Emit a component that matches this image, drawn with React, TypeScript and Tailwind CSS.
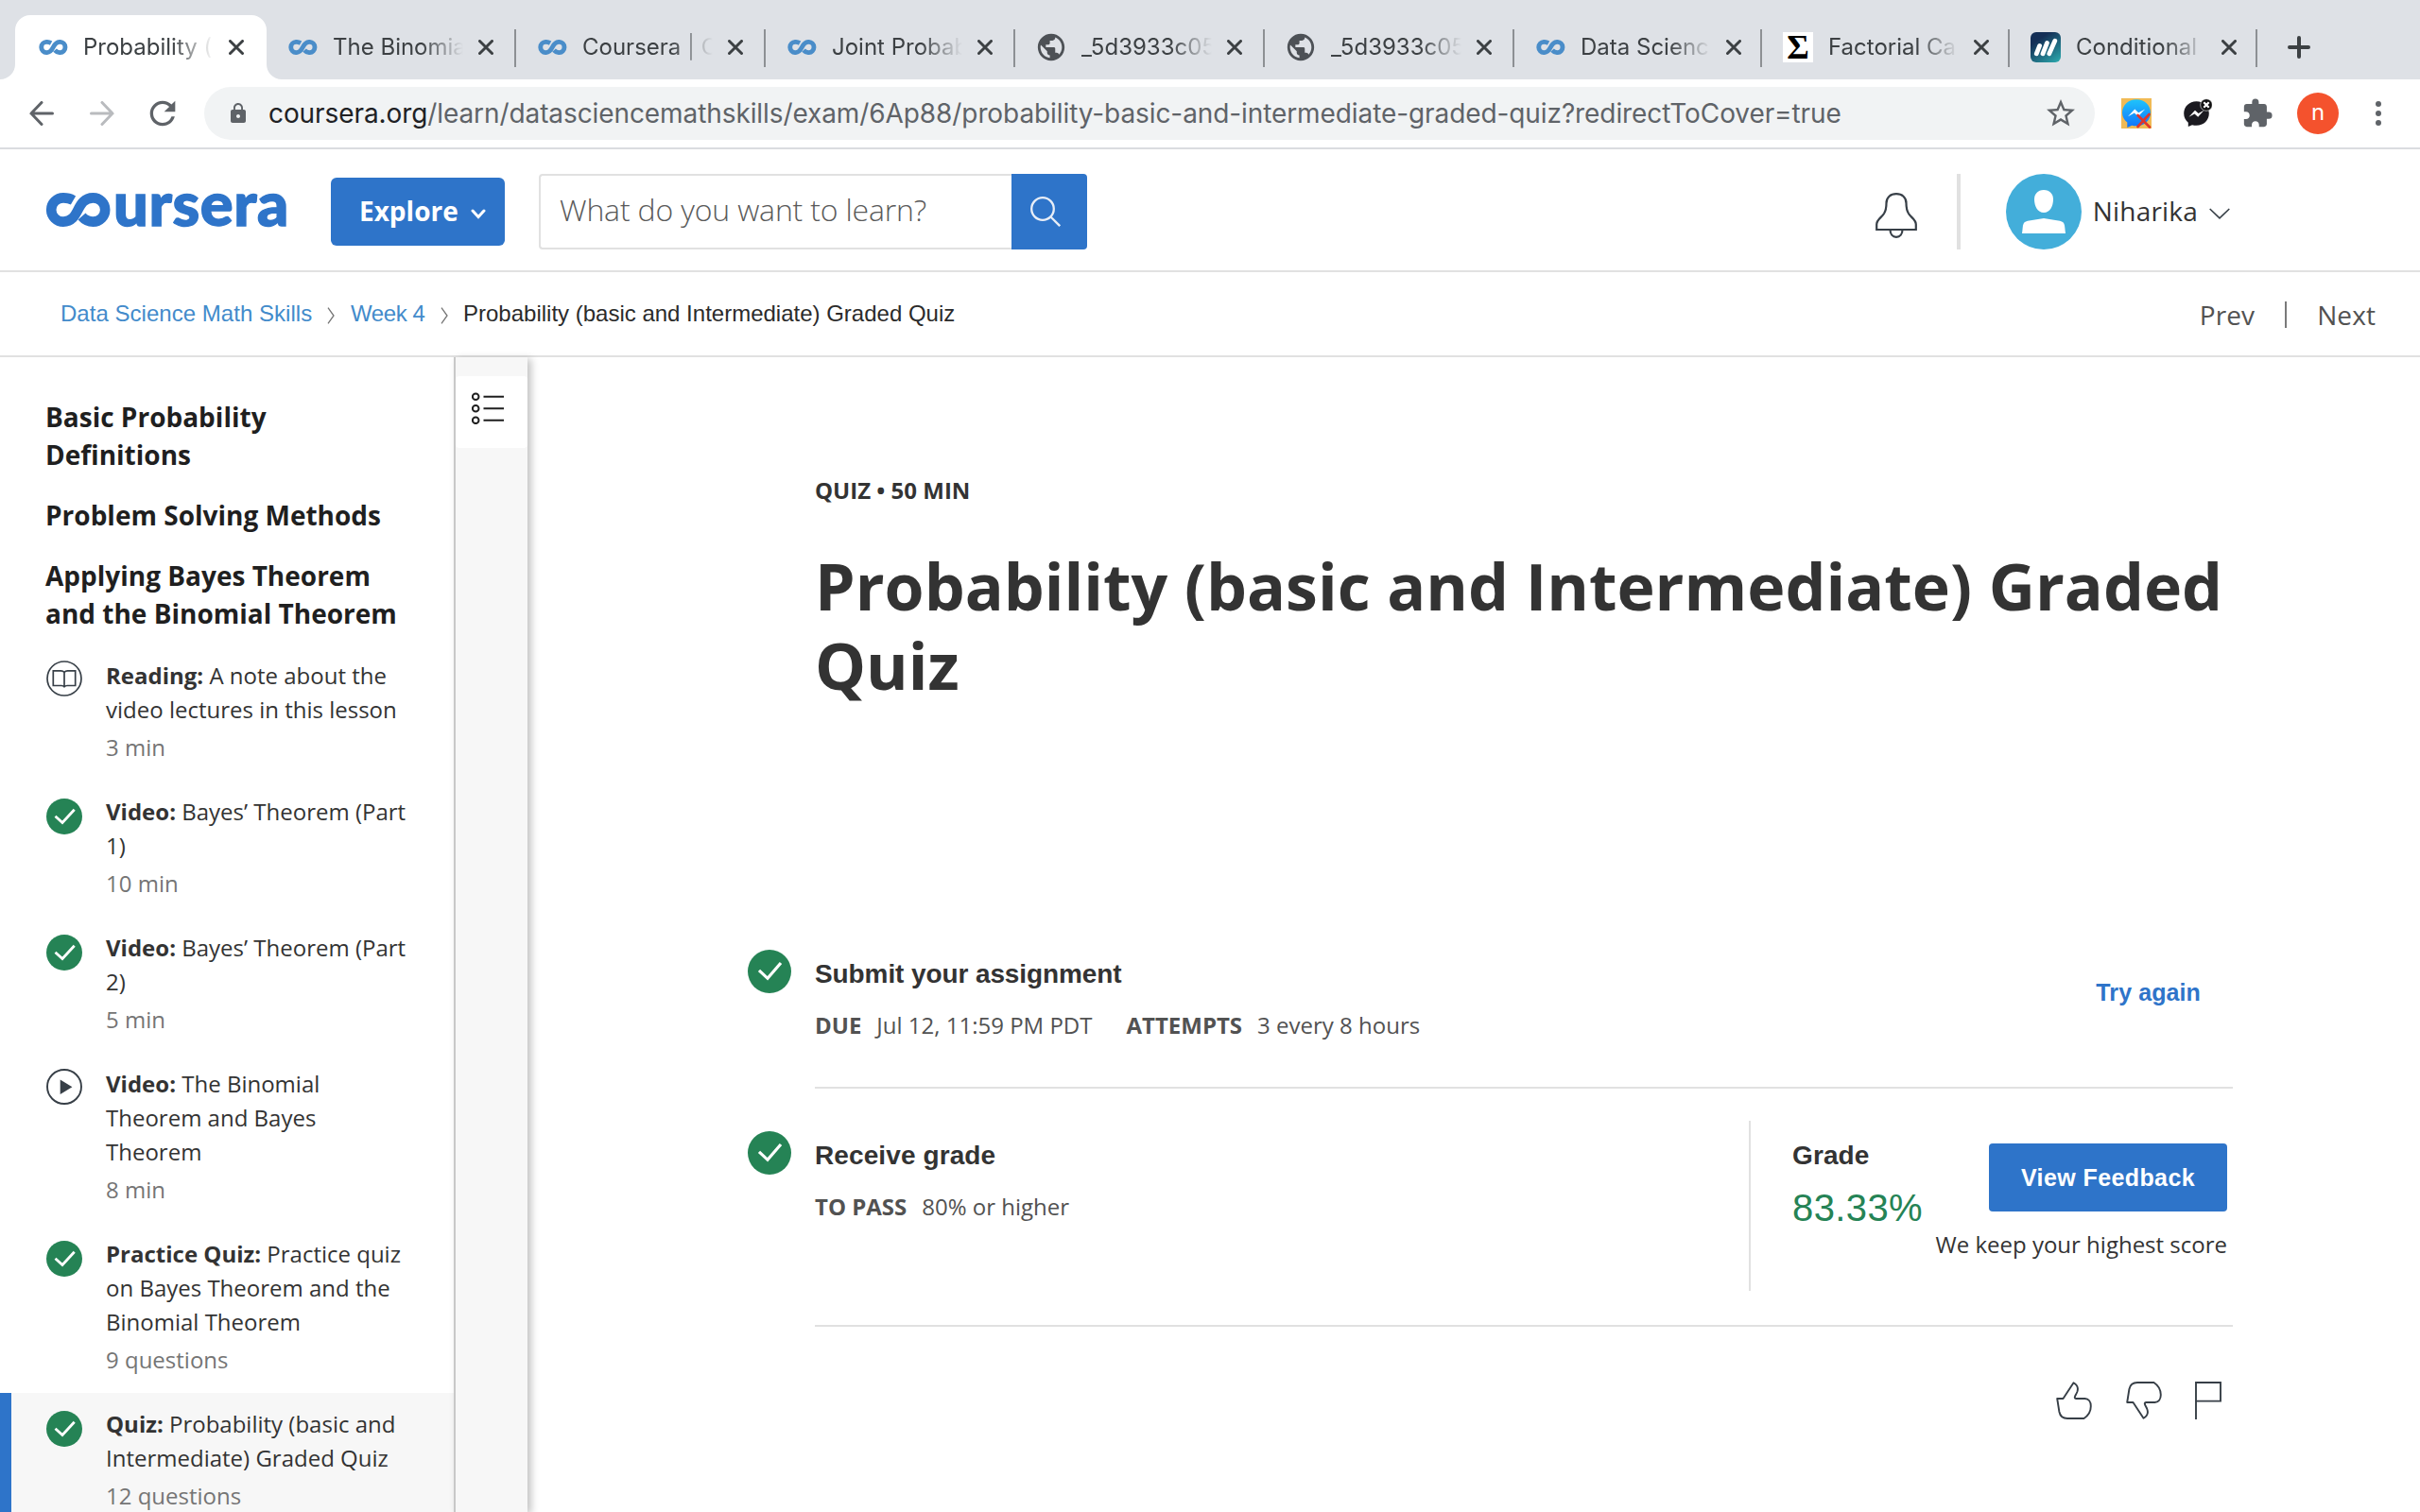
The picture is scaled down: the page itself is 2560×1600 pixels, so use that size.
import type { ReactNode } from "react";
import { MdExtension, MdLock, MdPublic, MdRefresh, MdStarBorder } from "react-icons/md";

const INFINITY_PATH =
  "M29.5 8C26 6 22.5 5.4 19 5.4A12.8 12.6 0 0 0 19 30.6C28 30.6 31.5 24 34.5 18C37.5 12 41 5.4 50.5 5.4A12.7 12.6 0 0 1 50.5 30.6C46 30.6 42 29 38.5 25";

function CourseraFavicon() {
  return (
    <svg viewBox="0 0 70 36" className="w-[31px] h-[16px]" fill="none" stroke="#4a8dc9" strokeWidth="11">
      <path d={INFINITY_PATH} />
    </svg>
  );
}

function SigmaFavicon() {
  return (
    <span className="flex w-8 h-8 items-center justify-center bg-white text-black font-bold text-[36px] leading-8 font-['Liberation_Serif',serif]">
      Σ
    </span>
  );
}

function BarsFavicon() {
  return (
    <svg viewBox="0 0 32 32" className="w-8 h-8">
      <defs>
        <linearGradient id="bars" x1="0.2" y1="0" x2="0.9" y2="1">
          <stop offset="0.2" stopColor="#142f56" />
          <stop offset="1" stopColor="#2ba6ab" />
        </linearGradient>
      </defs>
      <rect width="32" height="32" rx="6" fill="url(#bars)" />
      <path d="M6.3 22.8L9.6 14.4M13 22.8L17.4 11.6M19.8 22.8L25.8 9.2" stroke="#fff" strokeWidth="4.8" strokeLinecap="round" />
    </svg>
  );
}

type TabData = { title: string; icon: "coursera" | "globe" | "sigma" | "bars"; wide: boolean; active?: boolean; divider: boolean };

const TABS: TabData[] = [
  { title: "Probability (", icon: "coursera", wide: true, active: true, divider: false },
  { title: "The Binomia", icon: "coursera", wide: true, divider: true },
  { title: "Coursera | C", icon: "coursera", wide: true, divider: true },
  { title: "Joint Probab", icon: "coursera", wide: true, divider: true },
  { title: "_5d3933c05", icon: "globe", wide: true, divider: true },
  { title: "_5d3933c05", icon: "globe", wide: true, divider: true },
  { title: "Data Scienc", icon: "coursera", wide: false, divider: true },
  { title: "Factorial Ca", icon: "sigma", wide: false, divider: true },
  { title: "Conditional", icon: "bars", wide: false, divider: true },
];

function Tab({ tab }: { tab: TabData }) {
  return (
    <div className={`relative flex h-[68px] shrink-0 items-center pl-[23px] ${tab.wide ? "w-[264px]" : "w-[262px]"}`}>
      {tab.active && (
        <svg viewBox="0 0 298 68" className="absolute left-[-17px] top-0 h-[68px] w-[298px]" fill="#fff">
          <path d="M0 68a16 16 0 0 0 16-16V16A16 16 0 0 1 32 0H266a16 16 0 0 1 16 16V52a16 16 0 0 0 16 16z" />
        </svg>
      )}
      <span className="relative flex w-8 shrink-0 items-center justify-center">
        {tab.icon === "coursera" && <CourseraFavicon />}
        {tab.icon === "globe" && <MdPublic size={34} color="#4d5156" className="shrink-0" />}
        {tab.icon === "sigma" && <SigmaFavicon />}
        {tab.icon === "bars" && <BarsFavicon />}
      </span>
      <span className="relative ml-4 w-[142px] shrink-0 whitespace-nowrap text-2xl text-[#3c4043] [mask-image:linear-gradient(to_right,#000_calc(100%-48px),transparent_calc(100%-4px))]">
        {tab.title}
      </span>
      <svg viewBox="0 0 16 16" className="relative ml-3 h-4 w-4 shrink-0" stroke="#3c4043" strokeWidth="3" strokeLinecap="round">
        <path d="M1.5 1.5l13 13M14.5 1.5l-13 13" />
      </svg>
      {tab.divider && <span className="absolute right-[-1px] top-[15px] h-10 w-0.5 bg-[#8d9094]" />}
    </div>
  );
}

function BrowserChrome() {
  return (
    <div className="font-['Inter',sans-serif]">
      <div className="flex h-[84px] bg-[#dee1e6] pl-[17px] pt-4">
        {TABS.map((tab, i) => (
          <Tab key={i} tab={tab} />
        ))}
        <svg viewBox="0 0 24 24" className="ml-[33px] mt-[22px] h-6 w-6" stroke="#3c4043" strokeWidth="4" strokeLinecap="round">
          <path d="M12 2v20M2 12h20" />
        </svg>
      </div>
      <div className="flex h-[74px] items-center border-b-2 border-[#dadce0] bg-white pl-[31px]">
        <svg viewBox="0 0 26 26" className="h-[26px] w-[26px]" fill="none" stroke="#5f6368" strokeWidth="3" strokeLinecap="round">
          <path d="M24.5 13H2M13 1.5L2 13L13 24.5" />
        </svg>
        <svg viewBox="0 0 26 26" className="ml-[38px] h-[26px] w-[26px]" fill="none" stroke="#b9bbbe" strokeWidth="3" strokeLinecap="round">
          <path d="M1.5 13H24M13 1.5L24 13L13 24.5" />
        </svg>
        <MdRefresh size={40} color="#5f6368" className="ml-[31px]" />
        <div className="ml-6 flex h-14 w-[2000px] items-center rounded-full bg-[#f1f3f4] pl-6">
          <MdLock size={24} color="#5f6368" className="shrink-0" />
          <span className="ml-5 whitespace-nowrap text-[28px] tracking-[-0.09px] text-[#5f6368]">
            <span className="text-[#202124]">coursera.org</span>
            /learn/datasciencemathskills/exam/6Ap88/probability-basic-and-intermediate-graded-quiz?redirectToCover=true
          </span>
          <MdStarBorder size={36} color="#5f6368" className="ml-auto mr-[18px] shrink-0" />
        </div>
        <svg viewBox="0 0 32 32" className="ml-7 h-8 w-8">
          <defs>
            <linearGradient id="msg" x1="0" y1="0" x2="0" y2="1">
              <stop offset="0" stopColor="#1fc4fb" />
              <stop offset="1" stopColor="#1173fb" />
            </linearGradient>
          </defs>
          <rect width="32" height="32" fill="#f0ba55" />
          <path d="M16 1.2C7.6 1.2 1 7.2 1 15.3C1 19.6 3 23.1 6.3 25.6V31L11.2 28.7C12.7 29.1 14.3 29.3 16 29.3C24.4 29.3 31 23.3 31 15.3C31 7.2 24.4 1.2 16 1.2Z" fill="url(#msg)" />
          <path d="M7 19.2L14.3 11.5L18.2 15.2L25.2 11.5L17.8 19.2L13.900 15.5Z" fill="#fff" />
          <path d="M17.5 18L30 30.5M29.5 17L17.5 30" stroke="#e0342c" strokeWidth="2.6" strokeLinecap="round" />
        </svg>
        <svg viewBox="0 0 32 32" className="ml-8 h-8 w-8">
          <path d="M15.5 3.2C7.9 3.2 2.2 8.7 2.2 16C2.2 20 4 23.4 6.8 25.7V30L11 28.2C12.4 28.6 13.9 28.8 15.5 28.8C23 28.8 28.8 23.3 28.8 16C28.8 8.7 23 3.2 15.5 3.2Z" fill="#1b1a20" />
          <path d="M7.5 19.7L14 12.7L17.6 16L23.5 12.7L17.2 19.7L13.5 16.5Z" fill="#fff" />
          <circle cx="26" cy="7" r="6.3" fill="#111" stroke="#fff" strokeWidth="0.6" />
          <path d="M23.3 4.3L28.7 9.7M28.7 4.3L23.3 9.7" stroke="#fff" strokeWidth="2.2" />
        </svg>
        <MdExtension size={34} color="#5f6368" className="ml-[31px]" />
        <span className="ml-[25px] flex h-11 w-11 items-center justify-center rounded-full bg-[#f4522d] pb-0.5 text-2xl leading-none text-white">n</span>
        <svg viewBox="0 0 6 26" className="ml-[39px] h-[26px] w-1.5" fill="#5f6368">
          <circle cx="3" cy="3" r="3" />
          <circle cx="3" cy="13" r="3" />
          <circle cx="3" cy="23" r="3" />
        </svg>
      </div>
    </div>
  );
}

function SiteHeader() {
  return (
    <header className="flex h-[130px] items-start border-b-2 border-[#e1e1e1] pl-12 pt-[26px]">
      <div className="mt-5 flex h-9 w-[254px] items-start text-[#2e74c9]">
        <svg viewBox="0 0 70 36" className="h-9 w-[70px] shrink-0" fill="none" stroke="currentColor" strokeWidth="10.6">
          <path d={INFINITY_PATH} />
        </svg>
        <span className="mt-[-8px] pl-0.5 font-['Lato',sans-serif] text-[65px] font-black leading-9 tracking-[0.6px] [-webkit-text-stroke:1.4px_#2e74c9]">ursera</span>
      </div>
      <button className="ml-12 mt-1 flex h-[72px] w-[184px] items-center rounded-md bg-[#2e74c9] pl-[30px] text-[28px] font-bold text-white">
        <span className="-mt-0.5">Explore</span>
        <svg viewBox="0 0 16 11" className="ml-[13px] mt-1 h-[11px] w-4" fill="none" stroke="#fff" strokeWidth="3" strokeLinecap="round">
          <path d="M2 2l6 6.5l6-6.5" />
        </svg>
      </button>
      <div className="ml-9 flex h-20 w-[580px]">
        <div className="flex w-[500px] items-center rounded-l border-2 border-r-0 border-[#e1e1e1] pl-5 text-[32px] font-light tracking-[-0.17px] text-[#5a5a5a]">
          <span className="-mt-1">What do you want to learn?</span>
        </div>
        <button className="flex w-20 items-center justify-center rounded-r bg-[#2e74c9] pr-2">
          <svg viewBox="0 0 32 32" className="h-8 w-8" fill="none" stroke="#e8eef7" strokeWidth="2.3">
            <circle cx="13" cy="13" r="11.8" />
            <path d="M21.5 21.5L31.2 31.2" />
          </svg>
        </button>
      </div>
      <div className="ml-auto mr-[201px] flex h-20 items-center">
        <svg viewBox="0 0 44 48" className="mt-2 h-12 w-11" fill="none" stroke="#373f47" strokeWidth="2.2">
          <path d="M1.2 39V33.5C1.2 28.5 6 26.5 9 22C11.5 18 11.5 14 11.5 11C11.5 4.8 16 1.2 22 1.2C28 1.2 32.5 4.8 32.5 11C32.5 14 32.5 18 35 22C38 26.5 42.8 28.5 42.8 33.5V39Z" />
          <path d="M15.5 39C15.5 43.5 18 46.8 22 46.8C26 46.8 28.5 43.5 28.5 39" />
        </svg>
        <span className="ml-[42px] h-20 w-1 bg-[#e1e1e1]" />
        <svg viewBox="0 0 80 80" className="ml-12 h-20 w-20">
          <circle cx="40" cy="40" r="40" fill="#43aeda" />
          <path d="M40 17C46.5 17 50 21.5 50 27C50 34 46.5 41 40 41C33.5 41 30 34 30 27C30 21.5 33.5 17 40 17Z" fill="#fff" />
          <path d="M17 63L18 54.5C18.5 51.5 20 50.5 23 49.7L40 47L57 49.7C60 50.5 61.5 51.5 62 54.5L63 63Z" fill="#fff" />
        </svg>
        <span className="-mt-0.5 ml-3 text-[28px] tracking-[0.2px] text-[#333]">Niharika</span>
        <svg viewBox="0 0 22 12" className="ml-3 mt-1 h-3 w-[22px]" fill="none" stroke="#373f47" strokeWidth="1.6">
          <path d="M0.7 1l10.3 9.8l10.3-9.8" />
        </svg>
      </div>
    </header>
  );
}

function CrumbChevron() {
  return (
    <svg viewBox="0 0 8 18" className="mt-1 h-[18px] w-2" fill="none" stroke="#757575" strokeWidth="1.3">
      <path d="M1 0.6l6 8.4l-6 8.4" />
    </svg>
  );
}

function Breadcrumbs() {
  return (
    <nav className="flex h-[90px] items-center border-b-2 border-[#e1e1e1] pl-16">
      <div className="flex items-center font-['Liberation_Sans',sans-serif] text-2xl text-[#438bcb]">
        <span className="w-[268px] whitespace-nowrap tracking-[0.03px]">Data Science Math Skills</span>
        <span className="ml-3.5 flex">
          <CrumbChevron />
        </span>
        <span className="ml-[17px] w-[79px] whitespace-nowrap tracking-[-0.4px]">Week 4</span>
        <span className="ml-4 flex">
          <CrumbChevron />
        </span>
        <span className="ml-4 whitespace-nowrap text-[#2b2b2b]">Probability (basic and Intermediate) Graded Quiz</span>
      </div>
      <div className="ml-auto mr-[47px] mt-0.5 flex items-center text-[28px] tracking-[0.1px] text-[#525252]">
        <span>Prev</span>
        <span className="ml-8 h-7 w-0.5 bg-[#7a7a7a]" />
        <span className="ml-8">Next</span>
      </div>
    </nav>
  );
}

function SmallCheck() {
  return (
    <svg viewBox="0 0 38 38" className="h-[38px] w-[38px]" fill="none">
      <circle cx="19" cy="19" r="19" fill="#258355" />
      <path d="M9.5 18.7L17 25.5L29.7 11.8" stroke="#fff" strokeWidth="2.8" />
    </svg>
  );
}

function ReadingIcon() {
  return (
    <svg viewBox="0 0 38 38" className="h-[38px] w-[38px]" fill="none" stroke="#373f47" strokeWidth="1.7">
      <circle cx="19" cy="19" r="18" />
      <path d="M19 12.5C18 11.2 17 10.8 15.5 10.8H7.3V26.5H16C17.5 26.5 18.3 27 19 27.8C19.7 27 20.5 26.5 22 26.5H30.7V10.8H22.5C21 10.8 20 11.2 19 12.5V27.5" />
    </svg>
  );
}

function PlayIcon() {
  return (
    <svg viewBox="0 0 38 38" className="h-[38px] w-[38px]" fill="none">
      <circle cx="19" cy="19" r="18" stroke="#373f47" strokeWidth="1.9" />
      <path d="M14.7 11.6L27.4 19.2L14.7 27Z" fill="#373f47" />
    </svg>
  );
}

const ITEMS: { kind: string; lines: string[]; meta: string; icon: "check" | "read" | "play"; active?: boolean }[] = [
  { kind: "Reading:", lines: ["A note about the", "video lectures in this lesson"], meta: "3 min", icon: "read" },
  { kind: "Video:", lines: ["Bayes’ Theorem (Part", "1)"], meta: "10 min", icon: "check" },
  { kind: "Video:", lines: ["Bayes’ Theorem (Part", "2)"], meta: "5 min", icon: "check" },
  { kind: "Video:", lines: ["The Binomial", "Theorem and Bayes", "Theorem"], meta: "8 min", icon: "play" },
  { kind: "Practice Quiz:", lines: ["Practice quiz", "on Bayes Theorem and the", "Binomial Theorem"], meta: "9 questions", icon: "check" },
  { kind: "Quiz:", lines: ["Probability (basic and", "Intermediate) Graded Quiz"], meta: "12 questions", icon: "check", active: true },
];

function Sidebar() {
  return (
    <aside className="w-[480px] shrink-0 overflow-hidden">
      <div className="flex flex-col gap-6 pl-12 pt-[43px] text-[28px] font-bold leading-10 text-[#1f1f1f]">
        <h3>
          Basic Probability
          <br />
          Definitions
        </h3>
        <h3>Problem Solving Methods</h3>
        <h3>
          Applying Bayes Theorem
          <br />
          and the Binomial Theorem
        </h3>
      </div>
      <ul className="mt-[13px] text-2xl leading-9">
        {ITEMS.map((item, i) => (
          <li
            key={i}
            className={`flex items-start border-l-[12px] pb-[17px] pl-[37px] ${item.active ? "border-[#2e74c9] bg-[#f7f7f7]" : "border-transparent"}`}
          >
            <span className={item.icon === "check" ? "mt-[19px]" : "mt-[17px]"}>
              {item.icon === "check" && <SmallCheck />}
              {item.icon === "read" && <ReadingIcon />}
              {item.icon === "play" && <PlayIcon />}
            </span>
            <div className="ml-[25px] pt-[15px]">
              <p className="whitespace-nowrap text-[#333]">
                <b>{item.kind}</b> {item.lines[0]}
                {item.lines.slice(1).map((line) => (
                  <span key={line} className="block">
                    {line}
                  </span>
                ))}
              </p>
              <p className="mt-1 text-[#757575]">{item.meta}</p>
            </div>
          </li>
        ))}
      </ul>
    </aside>
  );
}

function Rail() {
  return (
    <div className="relative z-10 w-[78px] shrink-0 border-l-2 border-[#c8c8c8] bg-[#f7f7f7] pt-5 shadow-[4px_2px_8px_rgba(0,0,0,0.24)]">
      <div className="flex h-[76px] items-center rounded bg-white pl-[17px]">
        <svg viewBox="0 0 34 34" className="mt-[-8px] h-[34px] w-[34px]" fill="none" stroke="#1f1f1f" strokeWidth="2">
          <circle cx="4.2" cy="4.8" r="3.3" />
          <circle cx="4.2" cy="17.3" r="3.3" />
          <circle cx="4.2" cy="29.8" r="3.3" />
          <path d="M12.5 4.8H34M12.5 17.3H34M12.5 29.8H34" />
        </svg>
      </div>
    </div>
  );
}

function LargeCheck() {
  return (
    <svg viewBox="0 0 46 46" className="h-[46px] w-[46px] shrink-0" fill="none">
      <circle cx="23" cy="23" r="23" fill="#258355" />
      <path d="M12 21.8L21 30.3L35 14" stroke="#fff" strokeWidth="3.2" />
    </svg>
  );
}

function Detail({ label, children }: { label: string; children: ReactNode }) {
  return (
    <span className="flex">
      <b>{label}</b>
      <span className="ml-4">{children}</span>
    </span>
  );
}

function Thumb({ down }: { down?: boolean }) {
  return (
    <svg viewBox="0 0 38 40" className={`h-10 w-[38px] ${down ? "-scale-y-100" : ""}`} fill="none" stroke="#373f47" strokeWidth="1.9" strokeLinejoin="round">
      <path d="M1.2 18H7.5L18.5 1.2C22.5 3.5 23.6 7.5 22.3 11C21.3 13.5 20 15 19.8 16.5C19.7 17.5 20.2 18 21.2 18H30.5C34.5 18 36.8 21.5 36.8 26C36.8 31.5 34 36 29.5 39H12C7 39 4.3 36.5 3.4 32Z" />
    </svg>
  );
}

function Main() {
  return (
    <main className="w-[1804px] pt-[123px]">
      <div className="pl-[304px] text-[#333]">
        <p className="text-2xl font-bold leading-9">QUIZ • 50 MIN</p>
        <h1 className="mt-[41px] text-[68px] font-bold leading-[84px]">
          Probability (basic and Intermediate) Graded
          <br />
          Quiz
        </h1>
      </div>

      <section className="mt-[259px] flex h-[145px] pl-[233px]">
        <LargeCheck />
        <div className="ml-[25px] pt-1.5">
          <h2 className="font-['Liberation_Sans',sans-serif] text-[28px] font-bold leading-10 tracking-[-0.1px] text-[#333]">Submit your assignment</h2>
          <div className="mt-4 flex gap-9 text-2xl leading-9 text-[#525252]">
            <Detail label="DUE">Jul 12, 11:59 PM PDT</Detail>
            <Detail label="ATTEMPTS">3 every 8 hours</Detail>
          </div>
        </div>
        <a className="ml-auto mr-[34px] mt-[27px] font-['Liberation_Sans',sans-serif] text-[25px] font-bold leading-9 tracking-[0.1px] text-[#2e74c9]">Try again</a>
      </section>
      <div className="ml-[304px] h-0.5 bg-[#e1e1e1]" />

      <section className="flex h-[250px] pl-[233px]">
        <div className="flex pt-[45px]">
          <LargeCheck />
          <div className="ml-[25px] pt-1.5">
            <h2 className="font-['Liberation_Sans',sans-serif] text-[28px] font-bold leading-10 tracking-[0.1px] text-[#333]">Receive grade</h2>
            <div className="mt-4 flex text-2xl leading-9 text-[#525252]">
              <Detail label="TO PASS">80% or higher</Detail>
            </div>
          </div>
        </div>
        <div className="ml-auto mt-[34px] flex h-[180px] w-[512px] justify-between border-l-2 border-[#e1e1e1] pl-11 pr-1.5">
          <div className="w-[140px] shrink-0 pt-[17px] font-['Liberation_Sans',sans-serif]">
            <h3 className="text-[28px] font-bold leading-10 tracking-[0.1px] text-[#333]">Grade</h3>
            <p className="mt-[11px] text-[40px] leading-[48px] tracking-[0.4px] text-[#258355]">83.33%</p>
          </div>
          <div className="flex flex-col items-end pt-6">
            <button className="flex h-[72px] w-[252px] items-center justify-center rounded bg-[#2e74c9] font-['Liberation_Sans',sans-serif] text-[25px] font-bold leading-9 tracking-[0.4px] text-white">
              View Feedback
            </button>
            <p className="mt-[17px] whitespace-nowrap text-2xl leading-9 text-[#333]">We keep your highest score</p>
          </div>
        </div>
      </section>
      <div className="ml-[304px] h-0.5 bg-[#e1e1e1]" />

      <div className="mt-[58px] flex justify-end pr-3">
        <Thumb />
        <span className="ml-9">
          <Thumb down />
        </span>
        <svg viewBox="0 0 28 40" className="ml-[35px] h-10 w-7" fill="none" stroke="#373f47" strokeWidth="1.9">
          <path d="M1 40V1H27V20.6H1" />
        </svg>
      </div>
    </main>
  );
}

export default function App() {
  return (
    <div className="flex h-[1600px] w-[2560px] flex-col overflow-hidden bg-white font-['Open_Sans',sans-serif]">
      <BrowserChrome />
      <SiteHeader />
      <Breadcrumbs />
      <div className="flex min-h-0 flex-1">
        <Sidebar />
        <Rail />
        <Main />
      </div>
    </div>
  );
}
